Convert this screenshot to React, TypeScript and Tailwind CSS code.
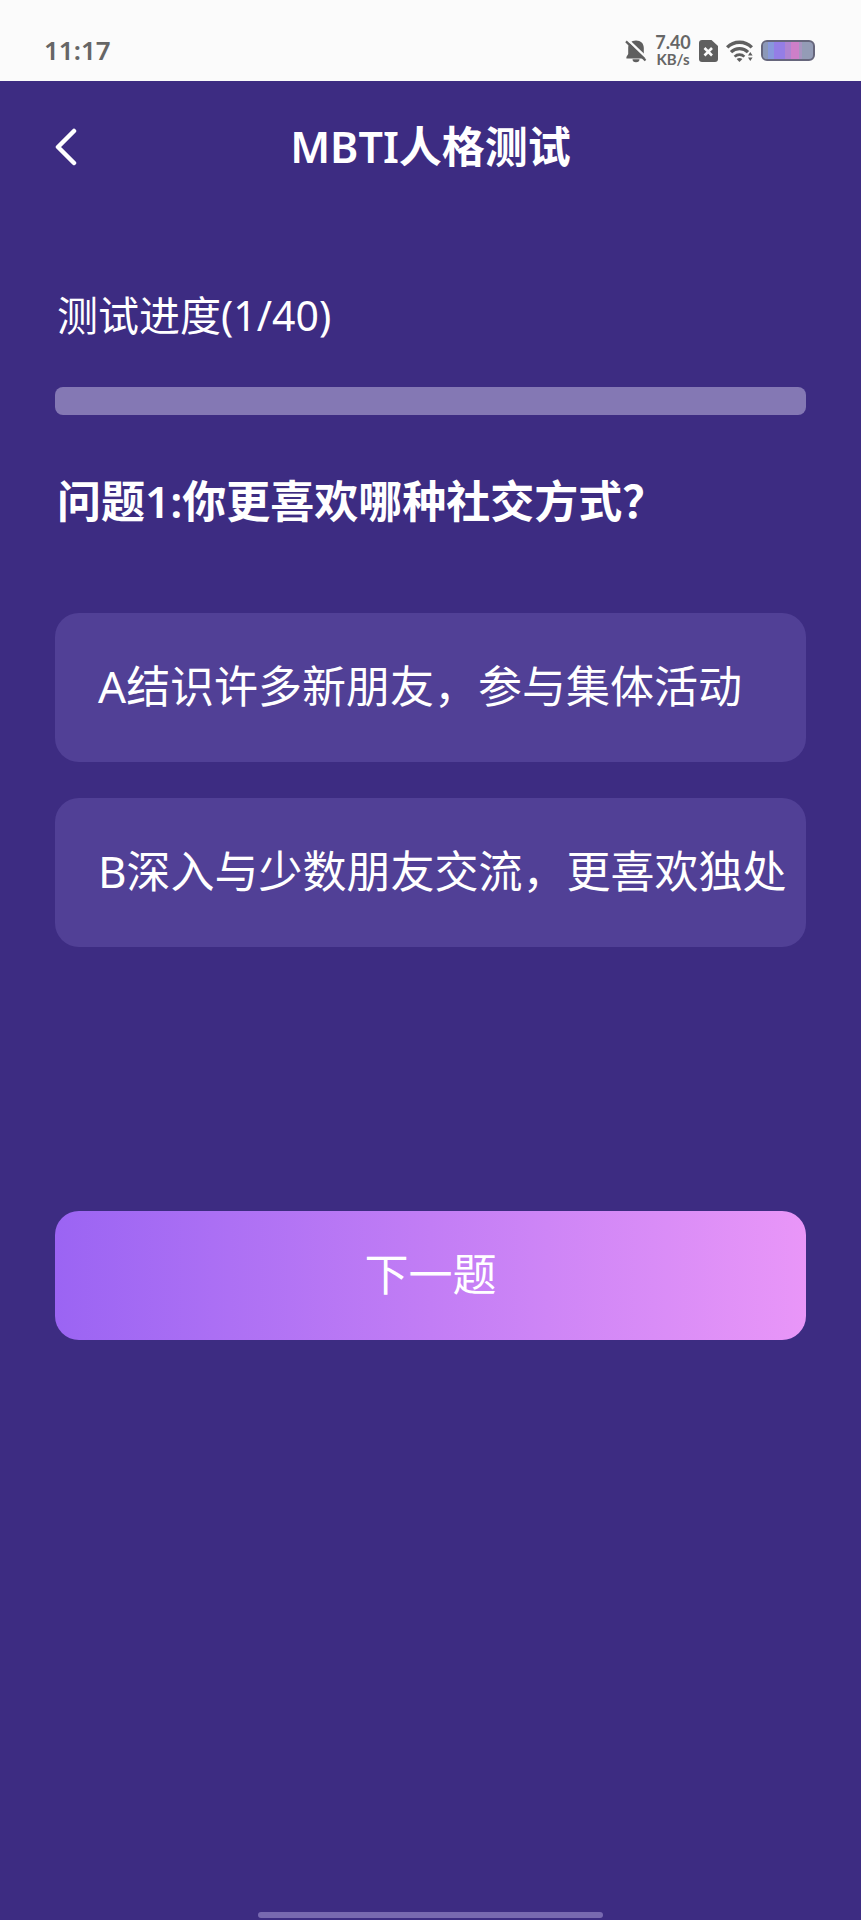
import { useState } from "react";

const TOTAL = 40;

const question = {
  index: 1,
  title: "你更喜欢哪种社交方式？",
  options: [
    { key: "A", text: "结识许多新朋友，参与集体活动" },
    { key: "B", text: "深入与少数朋友交流，更喜欢独处" },
  ],
};

const StatusBar = () => (
  <div className="flex h-[81px] items-center justify-between bg-[#fbfbfb] pt-5 pr-[46px] pl-11 text-[#666666]">
    <span className="text-[26px] font-semibold">11:17</span>

    <div className="flex items-center gap-2">
      {/* Muted bell */}
      <svg width="22" height="24" viewBox="0 0 22 24">
        <path
          d="M11 1.5c-4.8 0-7.8 3-7.8 7.4v6.1L1.4 18v1.6h19.2V18l-1.800-3V8.900c0-4.400-3-7.400-7.800-7.400zM7.500 20.200a3.500 3 0 0 0 7 0z"
          fill="#5f5f5f"
        />
        <path d="M2.900 0.900L22 19.200" stroke="#fbfbfb" strokeWidth="2.400" />
        <path d="M1 2.400L20.500 21.500" stroke="#5f5f5f" strokeWidth="2.200" />
      </svg>

      {/* Network speed */}
      <div className="flex w-9 flex-col items-center font-[Lato,sans-serif] font-bold">
        <span className="text-[18px] leading-[17px]">7.40</span>
        <span className="text-[15px] leading-[17px]">KB/s</span>
      </div>

      {/* Sim card */}
      <svg width="19" height="22" viewBox="0 0 19 22">
        <path
          d="M3 0h9.500L19 6v13a3 3 0 0 1-3 3H3a3 3 0 0 1-3-3V3a3 3 0 0 1 3-3z"
          fill="#5f5f5f"
        />
        <path d="M5.500 8l7.500 7.500M13 8l-7.500 7.500" stroke="#fbfbfb" strokeWidth="2.600" />
      </svg>

      {/* Wifi */}
      <svg width="27" height="22" viewBox="0 0 27 22" fill="none">
        <path d="M1.200 7.400a17.400 17.400 0 0 1 24.600 0" stroke="#5f5f5f" strokeWidth="3.400" />
        <path d="M5 12.200a12 12 0 0 1 17 0" stroke="#5f5f5f" strokeWidth="3.200" />
        <path d="M8.600 16.600a7 7 0 0 1 9.800 0" stroke="#5f5f5f" strokeWidth="2.600" />
        <path d="M10.600 19q2.900-2 5.800 0L13.500 22z" fill="#5f5f5f" />
        <path d="M22 15.500l2.300-3.500 2.300 3.500zM22 17.500l2.300 3.500 2.300-3.500z" fill="#5f5f5f" />
      </svg>

      {/* Battery */}
      <div className="flex h-[21px] w-[54px] overflow-hidden rounded-md border-2 border-[#66667c] bg-[#949cb6]">
        <div className="w-[5px] bg-[#8c98b8]" />
        <div className="w-[6px] bg-[#8898dc]" />
        <div className="w-[11px] bg-[#947ee6]" />
        <div className="w-[6px] bg-[#ae84d2]" />
        <div className="w-[8px] bg-[#cd7fc8]" />
        <div className="w-[3px] bg-[#a894c0]" />
      </div>
    </div>
  </div>
);

const App = () => {
  const [selected, setSelected] = useState("");

  return (
    <div className="flex min-h-screen flex-col bg-[#3d2c82] font-['Noto_Sans','Noto_Sans_CJK_SC',sans-serif] text-white">
      <StatusBar />

      {/* Title bar */}
      <header className="grid h-[132px] grid-cols-[1fr_auto_1fr] items-center px-[55px]">
        <button type="button" aria-label="返回" className="w-10">
          <svg width="22" height="38" viewBox="0 0 22 38" fill="none">
            <path
              d="M19 3L3 19l16 16"
              stroke="#fff"
              strokeWidth="4.500"
              strokeLinecap="round"
              strokeLinejoin="round"
            />
          </svg>
        </button>
        <h1 className="text-[43px] leading-[60px] font-semibold">MBTI人格测试</h1>
      </header>

      <main className="flex-1 px-[55px] pt-[72px]">
        <p className="pl-0.5 text-[41px] leading-[60px]">
          测试进度({question.index}/{TOTAL})
        </p>
        <div
          role="progressbar"
          aria-label="测试进度"
          aria-valuenow={question.index - 1}
          aria-valuemax={TOTAL}
          className="mt-[42px] h-7 overflow-hidden rounded-lg bg-[#8478b4]">
          <div
            className="h-full bg-[#9b64f3]"
            style={{ width: `${((question.index - 1) / TOTAL) * 100}%` }}
          />
        </div>

        <fieldset className="mt-[54px]">
          <legend className="pl-0.5 text-[44px] leading-[64px] font-semibold">
            问题{question.index}:{question.title}
          </legend>
          <div className="mt-20 flex flex-col gap-9">
            {question.options.map((option) => (
              <label
                key={option.key}
                className="relative flex h-[149px] cursor-pointer items-center rounded-3xl bg-[#514096] pb-1 pl-[43px] text-[44px] whitespace-nowrap has-checked:bg-[#6b58b4]">
                <input
                  type="radio"
                  name="answer"
                  value={option.key}
                  checked={selected === option.key}
                  onChange={() => setSelected(option.key)}
                  className="sr-only"
                />
                {option.key}
                {option.text}
              </label>
            ))}
          </div>
        </fieldset>

        <button
          type="button"
          className="mt-[264px] h-[129px] w-full rounded-3xl bg-linear-to-r from-[#9b64f3] via-[#c27df5] to-[#e996f8] pb-1 text-[44px]">
          下一题
        </button>
      </main>

      {/* Home indicator */}
      <div className="mx-auto mb-0.5 h-1.5 w-2/5 rounded-full bg-[#7869b0]" />
    </div>
  );
};

export default App;
